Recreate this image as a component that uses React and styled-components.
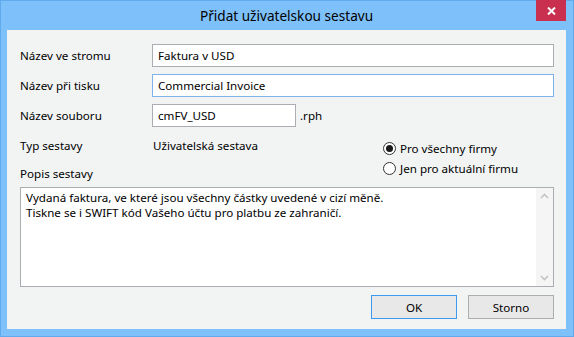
import React from 'react';
import styled, { createGlobalStyle } from 'styled-components';

const GlobalStyle = createGlobalStyle`
  html, body {
    margin: 0;
    padding: 0;
    background: #ffffff;
  }
  body {
    font-family: "Noto Sans", "Open Sans", sans-serif;
    font-size: 11.6px;
    color: #000;
  }
`;

// Okno dialogu
const Window = styled.div`
  position: relative;
  box-sizing: border-box;
  width: 574px;
  height: 337px;
  background: #7ec0f9;
  border: 1px solid #62aaee;
  display: flex;
  flex-direction: column;
  padding: 0 7px 7px 6px;
`;

const TitleBar = styled.div`
  height: 29px;
  display: flex;
  align-items: center;
  justify-content: center;
  font-size: 13.6px;
  color: #000;
  padding-bottom: 1px;
  box-sizing: border-box;
`;

const CloseButton = styled.div`
  position: absolute;
  top: -1px;
  right: 7px;
  width: 30px;
  height: 21px;
  background: #c9304f;
  display: flex;
  align-items: center;
  justify-content: center;
`;

const Client = styled.div`
  flex: 1;
  background: #f2f4f4;
  padding: 14px 12px 10px 13px;
  display: flex;
  flex-direction: column;
`;

const FieldGrid = styled.div`
  display: grid;
  grid-template-columns: 132px 1fr;
  row-gap: 7px;
  align-items: center;
`;

const Label = styled.div`
  line-height: 16px;
  white-space: nowrap;
`;

const TextBox = styled.div`
  box-sizing: border-box;
  height: 23px;
  width: ${p => (p.$width ? `${p.$width}px` : '100%')};
  background: #fff;
  border: 1px solid ${p => (p.$focused ? '#7eb4ea' : '#abadb3')};
  padding: 0 5px;
  display: flex;
  align-items: center;
  white-space: nowrap;
`;

const FileRow = styled.div`
  display: flex;
  align-items: center;
  gap: 4px;
`;

const Meta = styled.div`
  display: grid;
  grid-template-columns: 132px 231px 1fr;
  grid-template-rows: 20px 24px;
  margin-top: 11px;
`;

const Value = styled.div`
  line-height: 16px;
  padding-left: 1px;
`;

const PopisLabel = styled(Label)`
  grid-column: 1 / 3;
  margin-top: 8px;
`;

const Radio = styled.div`
  display: flex;
  align-items: center;
  gap: 4px;
  height: 20px;
  white-space: nowrap;
`;

const RadioCircle = styled.span`
  box-sizing: border-box;
  width: 13px;
  height: 13px;
  border-radius: 50%;
  border: 1px solid #333;
  background: #fff;
  display: flex;
  align-items: center;
  justify-content: center;

  &::after {
    content: '';
    width: 7px;
    height: 7px;
    border-radius: 50%;
    background: ${p => (p.$checked ? '#1a1a1a' : 'transparent')};
  }
`;

const Memo = styled.div`
  box-sizing: border-box;
  margin-top: 5px;
  height: 100px;
  background: #fff;
  border: 1px solid #abadb3;
  display: flex;
`;

const MemoText = styled.div`
  flex: 1;
  padding: 2px 5px;
  line-height: 15px;
`;

const ScrollBar = styled.div`
  width: 17px;
  background: #f5f5f5;
  display: flex;
  flex-direction: column;
  justify-content: space-between;
  align-items: center;
  padding: 5px 0;
`;

const Footer = styled.div`
  margin-top: 8px;
  display: flex;
  justify-content: flex-end;
  gap: 11px;
`;

const Button = styled.div`
  box-sizing: border-box;
  width: 86px;
  height: 24px;
  background: #e8e8e8;
  border: 1px solid ${p => (p.$default ? '#3c9af0' : '#adadad')};
  display: flex;
  align-items: center;
  justify-content: center;
`;

const Chevron = ({ down }) => (
  <svg width="9" height="6" viewBox="0 0 9 6">
    <path
      d={down ? 'M1 1 L4.5 4.5 L8 1' : 'M1 5 L4.5 1.5 L8 5'}
      fill="none"
      stroke="#c4c4c4"
      strokeWidth="1.6"
    />
  </svg>
);

export default function App() {
  return (
    <>
      <GlobalStyle />
      <Window>
        <TitleBar>Přidat uživatelskou sestavu</TitleBar>
        <CloseButton>
          <svg width="9" height="8" viewBox="0 0 9 8">
            <path d="M1 0.5 L8 7.5 M8 0.5 L1 7.5" stroke="#fff" strokeWidth="2" />
          </svg>
        </CloseButton>
        <Client>
          <FieldGrid>
            <Label>Název ve stromu</Label>
            <TextBox>Faktura v USD</TextBox>
            <Label>Název při tisku</Label>
            <TextBox $focused>Commercial Invoice</TextBox>
            <Label>Název souboru</Label>
            <FileRow>
              <TextBox $width={144}>cmFV_USD</TextBox>
              <span>.rph</span>
            </FileRow>
          </FieldGrid>
          <Meta>
            <Label>Typ sestavy</Label>
            <Value>Uživatelská sestava</Value>
            <Radio>
              <RadioCircle $checked />
              Pro všechny firmy
            </Radio>
            <PopisLabel>Popis sestavy</PopisLabel>
            <Radio>
              <RadioCircle />
              Jen pro aktuální firmu
            </Radio>
          </Meta>
          <Memo>
            <MemoText>
              Vydaná faktura, ve které jsou všechny částky uvedené v cizí měně.
              <br />
              Tiskne se i SWIFT kód Vašeho účtu pro platbu ze zahraničí.
            </MemoText>
            <ScrollBar>
              <Chevron />
              <Chevron down />
            </ScrollBar>
          </Memo>
          <Footer>
            <Button $default>OK</Button>
            <Button>Storno</Button>
          </Footer>
        </Client>
      </Window>
    </>
  );
}
